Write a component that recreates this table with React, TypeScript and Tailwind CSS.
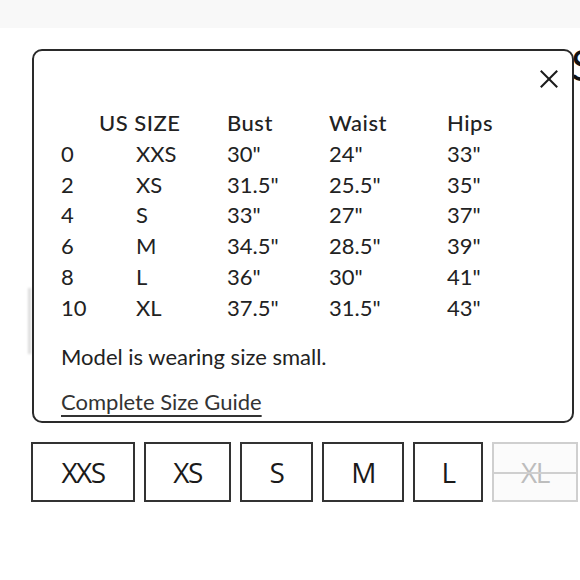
import React from "react";

const rows = [
  ["0", "XXS", "30\"", "24\"", "33\""],
  ["2", "XS", "31.5\"", "25.5\"", "35\""],
  ["4", "S", "33\"", "27\"", "37\""],
  ["6", "M", "34.5\"", "28.5\"", "39\""],
  ["8", "L", "36\"", "30\"", "41\""],
  ["10", "XL", "37.5\"", "31.5\"", "43\""],
];

const sizes = [
  { label: "XXS", w: "w-[104px]", off: false },
  { label: "XS", w: "w-[87px]", off: false },
  { label: "S", w: "w-[73px]", off: false },
  { label: "M", w: "w-[82px]", off: false },
  { label: "L", w: "w-[70px]", off: false },
  { label: "XL", w: "w-[86px]", off: true },
];

export default function App() {
  return (
    <div className="relative w-[580px] h-[580px] overflow-hidden bg-white text-[#222]" style={{ fontFamily: "Lato, 'Noto Sans', sans-serif" }}>
      <div className="h-[28px] bg-[#f8f8f8]" />

      {/* product title peeking out behind the popup */}
      <span className="absolute left-[571px] top-[44px] text-[42px] leading-none text-[#111]">S</span>
      <div className="absolute left-[28px] top-[288px] w-[3px] h-[66px] bg-[#dcdcdc] blur-[1px]" />

      <div className="relative mt-[21px] ml-[32px] w-[542px] h-[374px] rounded-[10px] border-2 border-[#2a2a2a] bg-white pl-[27px] pt-[57px]">
        <button className="absolute left-[506px] top-[19px] w-[18px] h-[18px]">
          <svg viewBox="0 0 18 18" className="w-[18px] h-[18px]" stroke="#1a1a1a" strokeWidth="2" strokeLinecap="square">
            <line x1="1.5" y1="1.5" x2="16.5" y2="16.5" />
            <line x1="16.5" y1="1.5" x2="1.5" y2="16.5" />
          </svg>
        </button>

        <div className="flex text-[22px] leading-[30.8px] font-medium tracking-[0.5px]">
          <span className="w-[166px] pl-[38px]">US SIZE</span>
          <span className="w-[102px]">Bust</span>
          <span className="w-[118px]">Waist</span>
          <span>Hips</span>
        </div>
        {rows.map(r => (
          <div key={r[0]} className="flex text-[22px] leading-[30.8px]">
            <span className="w-[75px]">{r[0]}</span>
            <span className="w-[91px]">{r[1]}</span>
            <span className="w-[102px]">{r[2]}</span>
            <span className="w-[118px]">{r[3]}</span>
            <span>{r[4]}</span>
          </div>
        ))}

        <p className="mt-[18px] text-[22px] leading-[30px]">Model is wearing size small.</p>
        <a className="block mt-[15px] text-[22px] leading-[30px] text-[#333] underline underline-offset-[5px] decoration-[1.5px]">Complete Size Guide</a>
      </div>

      <div className="flex gap-[9px] mt-[19px] ml-[31px]" style={{ fontFamily: "'Open Sans', sans-serif" }}>
        {sizes.map(s => (
          <div
            key={s.label}
            className={`relative h-[60px] ${s.w} flex items-center justify-center border-2 text-[28px] tracking-[-1.5px] ${s.off ? "border-[#cfcfcf] bg-[#fbfbfb] text-[#bdbdbd]" : "border-[#333] text-[#1a1a1a]"}`}
          >
            {s.label}
            {s.off && <div className="absolute left-0 right-0 top-[28px] h-[2px] bg-[#cfcfcf]" />}
          </div>
        ))}
      </div>
    </div>
  );
}
